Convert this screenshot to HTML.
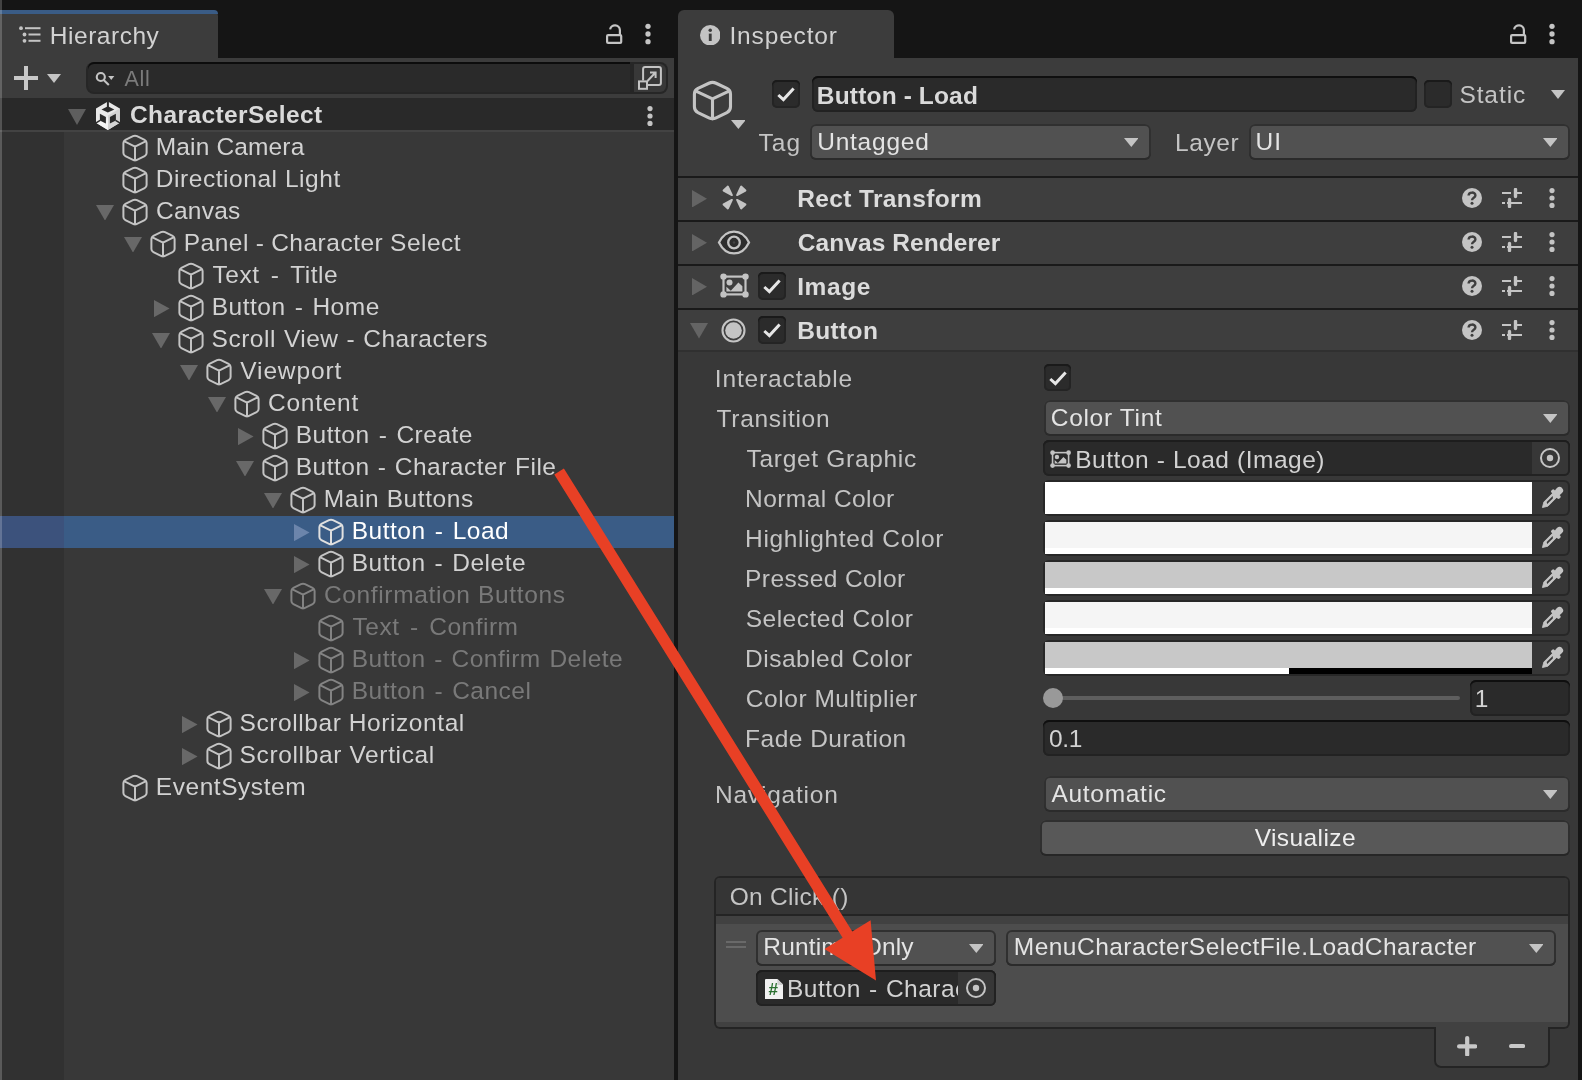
<!DOCTYPE html>
<html><head><meta charset="utf-8"><title>Unity Editor</title>
<style>
html,body{margin:0;padding:0}
body{width:1582px;height:1080px;overflow:hidden;background:#151515;position:relative;font-family:"Liberation Sans", sans-serif}
body>div,body>svg,body>span{position:absolute;display:block}
.t{white-space:nowrap;position:absolute;display:block}
.tl{left:0;top:0;width:1582px;height:1080px;will-change:transform}
</style></head><body>
<div style="left:0px;top:10px;width:218px;height:48px;background:#3c3c3c;border-radius:0 6px 0 0"></div>
<div style="left:0px;top:10px;width:218px;height:4px;background:#3a5c86;border-radius:0 6px 0 0"></div>
<div style="left:0px;top:58px;width:674px;height:40px;background:#3c3c3c;"></div>
<div style="left:0px;top:98px;width:674px;height:32px;background:#292929;"></div>
<div style="left:0px;top:130px;width:674px;height:2px;background:#434343;"></div>
<div style="left:0px;top:132px;width:64px;height:948px;background:#313131;"></div>
<div style="left:64px;top:132px;width:610px;height:948px;background:#383838;"></div>
<div style="left:0px;top:516px;width:64px;height:32px;background:#3c527c;"></div>
<div style="left:64px;top:516px;width:610px;height:32px;background:#3a5c86;"></div>
<div style="left:0px;top:0px;width:2px;height:1080px;background:rgba(255,255,255,0.2);"></div>
<svg style="left:19px;top:26px" width="22" height="17" viewBox="0 0 22 17" fill="#c4c4c4"><circle cx="2" cy="2.2" r="1.9"/><circle cx="5.5" cy="8.5" r="1.9"/><circle cx="5.5" cy="14.8" r="1.9"/><rect x="6" y="1.2" width="15.5" height="2"/><rect x="9.5" y="7.5" width="12" height="2"/><rect x="9.5" y="13.8" width="12" height="2"/></svg>
<svg style="left:605.8px;top:23.2px" width="17" height="22" viewBox="0 0 17 22" fill="none" stroke="#c4c4c4" stroke-width="2.2"><rect x="1.1" y="12.1" width="14.1" height="7.8" rx="1"/><path d="M4.1 6.4 A4.95 4.95 0 0 1 13.9 7.05 V12"/></svg>
<svg style="left:643.9px;top:22px" width="8" height="24" viewBox="-4 -12 8 24" fill="#c4c4c4"><circle cx="0" cy="-7.65" r="2.65"/><circle cx="0" cy="0" r="2.65"/><circle cx="0" cy="7.65" r="2.65"/></svg>
<svg style="left:14px;top:66px" width="24" height="24" viewBox="0 0 24 24" fill="#c8c8c8"><rect x="0" y="10" width="24" height="4"/><rect x="10" y="0" width="4" height="24"/></svg>
<svg style="left:47px;top:73.5px" width="14" height="9" viewBox="0 0 14 9"><path d="M0 0 H14 L7.0 9 Z" fill="#c4c4c4"/></svg>
<div style="left:86px;top:62px;width:582px;height:32px;background:#262626;border-radius:8px"></div>
<div style="left:88px;top:64px;width:543px;height:28px;background:#2a2a2a;border-radius:6px 0 0 6px;box-shadow:0 -2px 0 #0c0c0c"></div>
<div style="left:630px;top:62px;width:4px;height:32px;background:#262626;"></div>
<div style="left:634px;top:64px;width:32px;height:28px;background:#383838;border-radius:0 6px 6px 0"></div>
<svg style="left:95px;top:70px" width="20" height="17" viewBox="95 70 20 17" fill="none" stroke="#c4c4c4" stroke-width="2.1"><circle cx="100.8" cy="77" r="4.05"/><path d="M103.7 79.9 L108.8 84.9"/><path d="M108.2 76 H114.3 L111.25 79.9 Z" fill="#c4c4c4" stroke="none"/></svg>
<svg style="left:637px;top:65px" width="26" height="26" viewBox="0 0 26 26" fill="none" stroke="#c4c4c4" stroke-width="2"><path d="M6.1 15.4 V4.1 Q6.1 2.1 8.1 2.1 H21.9 Q23.9 2.1 23.9 4.1 V17.9 Q23.9 19.9 21.9 19.9 H11"/><rect x="2" y="16.4" width="8" height="7.4"/><path d="M10.5 16 L18.3 7.8 M13 7.5 H18.6 V13.1"/></svg>
<svg style="left:68px;top:108.8px" width="18" height="16" viewBox="0 0 18 16"><path d="M0 0 H18 L9.0 16 Z" fill="#5e5e5e"/></svg>
<svg style="left:95px;top:100px" width="26" height="31" viewBox="95 100 26 31"><path d="M107.9 101.6 L119.8 108.6 V122.8 L107.9 129.9 L96 122.8 V108.6 Z" fill="#e9e9e9"/><path d="M107.9 115.6 L119.8 108.6 V122.8 L107.9 129.9 Z" fill="#d4d4d4"/><path d="M107.9 115.6 V129.9 L96 122.8 L100 120.5 L105.8 123.5 Z" fill="#f4f4f4"/><path d="M107.9 101 V107" stroke="#2b2b2b" stroke-width="2"/><path d="M95.6 123.1 L100.2 120.3 M120.2 123.1 L115.6 120.3" stroke="#2b2b2b" stroke-width="1.5"/><path d="M107.9 106.3 L114.3 109.4 L107.9 112.5 L101.5 109.4 Z" fill="#2b2b2b"/><path d="M99.9 113.7 L105.9 116.9 V123.6 L99.9 120.4 Z" fill="#2b2b2b"/><path d="M115.9 113.7 L109.9 116.9 V123.6 L115.9 120.4 Z" fill="#2b2b2b"/></svg>
<svg style="left:646px;top:104px" width="8" height="24" viewBox="-4 -12 8 24" fill="#c4c4c4"><circle cx="0" cy="-7.4" r="2.6"/><circle cx="0" cy="0" r="2.6"/><circle cx="0" cy="7.4" r="2.6"/></svg>
<svg style="left:122px;top:134.1px" width="26" height="28" viewBox="0 0 26 28" fill="none" stroke="#c4c4c4" stroke-width="2" stroke-linejoin="round" stroke-linecap="round"><path d="M11.02 2.16 Q13.00 1.20 14.98 2.16 L22.62 5.84 Q24.60 6.80 24.60 9.00 L24.60 19.00 Q24.60 21.20 22.62 22.16 L14.98 25.84 Q13.00 26.80 11.02 25.84 L3.38 22.16 Q1.40 21.20 1.40 19.00 L1.40 9.00 Q1.40 6.80 3.38 5.84 Z M2 7.2 L13 12.6 L24 7.2 M13 12.6 V26.4"/></svg>
<svg style="left:122px;top:166.1px" width="26" height="28" viewBox="0 0 26 28" fill="none" stroke="#c4c4c4" stroke-width="2" stroke-linejoin="round" stroke-linecap="round"><path d="M11.02 2.16 Q13.00 1.20 14.98 2.16 L22.62 5.84 Q24.60 6.80 24.60 9.00 L24.60 19.00 Q24.60 21.20 22.62 22.16 L14.98 25.84 Q13.00 26.80 11.02 25.84 L3.38 22.16 Q1.40 21.20 1.40 19.00 L1.40 9.00 Q1.40 6.80 3.38 5.84 Z M2 7.2 L13 12.6 L24 7.2 M13 12.6 V26.4"/></svg>
<svg style="left:122px;top:198.1px" width="26" height="28" viewBox="0 0 26 28" fill="none" stroke="#c4c4c4" stroke-width="2" stroke-linejoin="round" stroke-linecap="round"><path d="M11.02 2.16 Q13.00 1.20 14.98 2.16 L22.62 5.84 Q24.60 6.80 24.60 9.00 L24.60 19.00 Q24.60 21.20 22.62 22.16 L14.98 25.84 Q13.00 26.80 11.02 25.84 L3.38 22.16 Q1.40 21.20 1.40 19.00 L1.40 9.00 Q1.40 6.80 3.38 5.84 Z M2 7.2 L13 12.6 L24 7.2 M13 12.6 V26.4"/></svg>
<svg style="left:95.9px;top:204.9px" width="18" height="15.6" viewBox="0 0 18 15.6"><path d="M0 0 H18 L9.0 15.6 Z" fill="#686868"/></svg>
<svg style="left:150px;top:230.1px" width="26" height="28" viewBox="0 0 26 28" fill="none" stroke="#c4c4c4" stroke-width="2" stroke-linejoin="round" stroke-linecap="round"><path d="M11.02 2.16 Q13.00 1.20 14.98 2.16 L22.62 5.84 Q24.60 6.80 24.60 9.00 L24.60 19.00 Q24.60 21.20 22.62 22.16 L14.98 25.84 Q13.00 26.80 11.02 25.84 L3.38 22.16 Q1.40 21.20 1.40 19.00 L1.40 9.00 Q1.40 6.80 3.38 5.84 Z M2 7.2 L13 12.6 L24 7.2 M13 12.6 V26.4"/></svg>
<svg style="left:123.9px;top:236.9px" width="18" height="15.6" viewBox="0 0 18 15.6"><path d="M0 0 H18 L9.0 15.6 Z" fill="#686868"/></svg>
<svg style="left:178px;top:262.1px" width="26" height="28" viewBox="0 0 26 28" fill="none" stroke="#c4c4c4" stroke-width="2" stroke-linejoin="round" stroke-linecap="round"><path d="M11.02 2.16 Q13.00 1.20 14.98 2.16 L22.62 5.84 Q24.60 6.80 24.60 9.00 L24.60 19.00 Q24.60 21.20 22.62 22.16 L14.98 25.84 Q13.00 26.80 11.02 25.84 L3.38 22.16 Q1.40 21.20 1.40 19.00 L1.40 9.00 Q1.40 6.80 3.38 5.84 Z M2 7.2 L13 12.6 L24 7.2 M13 12.6 V26.4"/></svg>
<svg style="left:178px;top:294.1px" width="26" height="28" viewBox="0 0 26 28" fill="none" stroke="#c4c4c4" stroke-width="2" stroke-linejoin="round" stroke-linecap="round"><path d="M11.02 2.16 Q13.00 1.20 14.98 2.16 L22.62 5.84 Q24.60 6.80 24.60 9.00 L24.60 19.00 Q24.60 21.20 22.62 22.16 L14.98 25.84 Q13.00 26.80 11.02 25.84 L3.38 22.16 Q1.40 21.20 1.40 19.00 L1.40 9.00 Q1.40 6.80 3.38 5.84 Z M2 7.2 L13 12.6 L24 7.2 M13 12.6 V26.4"/></svg>
<svg style="left:154px;top:299.8px" width="15.6" height="17.2" viewBox="0 0 15.6 17.2"><path d="M0 0 V17.2 L15.6 8.6 Z" fill="#686868"/></svg>
<svg style="left:178px;top:326.1px" width="26" height="28" viewBox="0 0 26 28" fill="none" stroke="#c4c4c4" stroke-width="2" stroke-linejoin="round" stroke-linecap="round"><path d="M11.02 2.16 Q13.00 1.20 14.98 2.16 L22.62 5.84 Q24.60 6.80 24.60 9.00 L24.60 19.00 Q24.60 21.20 22.62 22.16 L14.98 25.84 Q13.00 26.80 11.02 25.84 L3.38 22.16 Q1.40 21.20 1.40 19.00 L1.40 9.00 Q1.40 6.80 3.38 5.84 Z M2 7.2 L13 12.6 L24 7.2 M13 12.6 V26.4"/></svg>
<svg style="left:151.9px;top:332.9px" width="18" height="15.6" viewBox="0 0 18 15.6"><path d="M0 0 H18 L9.0 15.6 Z" fill="#686868"/></svg>
<svg style="left:206px;top:358.1px" width="26" height="28" viewBox="0 0 26 28" fill="none" stroke="#c4c4c4" stroke-width="2" stroke-linejoin="round" stroke-linecap="round"><path d="M11.02 2.16 Q13.00 1.20 14.98 2.16 L22.62 5.84 Q24.60 6.80 24.60 9.00 L24.60 19.00 Q24.60 21.20 22.62 22.16 L14.98 25.84 Q13.00 26.80 11.02 25.84 L3.38 22.16 Q1.40 21.20 1.40 19.00 L1.40 9.00 Q1.40 6.80 3.38 5.84 Z M2 7.2 L13 12.6 L24 7.2 M13 12.6 V26.4"/></svg>
<svg style="left:179.9px;top:364.9px" width="18" height="15.6" viewBox="0 0 18 15.6"><path d="M0 0 H18 L9.0 15.6 Z" fill="#686868"/></svg>
<svg style="left:234px;top:390.1px" width="26" height="28" viewBox="0 0 26 28" fill="none" stroke="#c4c4c4" stroke-width="2" stroke-linejoin="round" stroke-linecap="round"><path d="M11.02 2.16 Q13.00 1.20 14.98 2.16 L22.62 5.84 Q24.60 6.80 24.60 9.00 L24.60 19.00 Q24.60 21.20 22.62 22.16 L14.98 25.84 Q13.00 26.80 11.02 25.84 L3.38 22.16 Q1.40 21.20 1.40 19.00 L1.40 9.00 Q1.40 6.80 3.38 5.84 Z M2 7.2 L13 12.6 L24 7.2 M13 12.6 V26.4"/></svg>
<svg style="left:207.9px;top:396.9px" width="18" height="15.6" viewBox="0 0 18 15.6"><path d="M0 0 H18 L9.0 15.6 Z" fill="#686868"/></svg>
<svg style="left:262px;top:422.1px" width="26" height="28" viewBox="0 0 26 28" fill="none" stroke="#c4c4c4" stroke-width="2" stroke-linejoin="round" stroke-linecap="round"><path d="M11.02 2.16 Q13.00 1.20 14.98 2.16 L22.62 5.84 Q24.60 6.80 24.60 9.00 L24.60 19.00 Q24.60 21.20 22.62 22.16 L14.98 25.84 Q13.00 26.80 11.02 25.84 L3.38 22.16 Q1.40 21.20 1.40 19.00 L1.40 9.00 Q1.40 6.80 3.38 5.84 Z M2 7.2 L13 12.6 L24 7.2 M13 12.6 V26.4"/></svg>
<svg style="left:238px;top:427.8px" width="15.6" height="17.2" viewBox="0 0 15.6 17.2"><path d="M0 0 V17.2 L15.6 8.6 Z" fill="#686868"/></svg>
<svg style="left:262px;top:454.1px" width="26" height="28" viewBox="0 0 26 28" fill="none" stroke="#c4c4c4" stroke-width="2" stroke-linejoin="round" stroke-linecap="round"><path d="M11.02 2.16 Q13.00 1.20 14.98 2.16 L22.62 5.84 Q24.60 6.80 24.60 9.00 L24.60 19.00 Q24.60 21.20 22.62 22.16 L14.98 25.84 Q13.00 26.80 11.02 25.84 L3.38 22.16 Q1.40 21.20 1.40 19.00 L1.40 9.00 Q1.40 6.80 3.38 5.84 Z M2 7.2 L13 12.6 L24 7.2 M13 12.6 V26.4"/></svg>
<svg style="left:235.9px;top:460.9px" width="18" height="15.6" viewBox="0 0 18 15.6"><path d="M0 0 H18 L9.0 15.6 Z" fill="#686868"/></svg>
<svg style="left:290px;top:486.1px" width="26" height="28" viewBox="0 0 26 28" fill="none" stroke="#c4c4c4" stroke-width="2" stroke-linejoin="round" stroke-linecap="round"><path d="M11.02 2.16 Q13.00 1.20 14.98 2.16 L22.62 5.84 Q24.60 6.80 24.60 9.00 L24.60 19.00 Q24.60 21.20 22.62 22.16 L14.98 25.84 Q13.00 26.80 11.02 25.84 L3.38 22.16 Q1.40 21.20 1.40 19.00 L1.40 9.00 Q1.40 6.80 3.38 5.84 Z M2 7.2 L13 12.6 L24 7.2 M13 12.6 V26.4"/></svg>
<svg style="left:263.9px;top:492.9px" width="18" height="15.6" viewBox="0 0 18 15.6"><path d="M0 0 H18 L9.0 15.6 Z" fill="#686868"/></svg>
<svg style="left:318px;top:518.1px" width="26" height="28" viewBox="0 0 26 28" fill="none" stroke="#e0e0e0" stroke-width="2" stroke-linejoin="round" stroke-linecap="round"><path d="M11.02 2.16 Q13.00 1.20 14.98 2.16 L22.62 5.84 Q24.60 6.80 24.60 9.00 L24.60 19.00 Q24.60 21.20 22.62 22.16 L14.98 25.84 Q13.00 26.80 11.02 25.84 L3.38 22.16 Q1.40 21.20 1.40 19.00 L1.40 9.00 Q1.40 6.80 3.38 5.84 Z M2 7.2 L13 12.6 L24 7.2 M13 12.6 V26.4"/></svg>
<svg style="left:294px;top:523.8px" width="15.6" height="17.2" viewBox="0 0 15.6 17.2"><path d="M0 0 V17.2 L15.6 8.6 Z" fill="#6c85ab"/></svg>
<svg style="left:318px;top:550.1px" width="26" height="28" viewBox="0 0 26 28" fill="none" stroke="#c4c4c4" stroke-width="2" stroke-linejoin="round" stroke-linecap="round"><path d="M11.02 2.16 Q13.00 1.20 14.98 2.16 L22.62 5.84 Q24.60 6.80 24.60 9.00 L24.60 19.00 Q24.60 21.20 22.62 22.16 L14.98 25.84 Q13.00 26.80 11.02 25.84 L3.38 22.16 Q1.40 21.20 1.40 19.00 L1.40 9.00 Q1.40 6.80 3.38 5.84 Z M2 7.2 L13 12.6 L24 7.2 M13 12.6 V26.4"/></svg>
<svg style="left:294px;top:555.8px" width="15.6" height="17.2" viewBox="0 0 15.6 17.2"><path d="M0 0 V17.2 L15.6 8.6 Z" fill="#686868"/></svg>
<svg style="left:290px;top:582.1px" width="26" height="28" viewBox="0 0 26 28" fill="none" stroke="#838383" stroke-width="2" stroke-linejoin="round" stroke-linecap="round"><path d="M11.02 2.16 Q13.00 1.20 14.98 2.16 L22.62 5.84 Q24.60 6.80 24.60 9.00 L24.60 19.00 Q24.60 21.20 22.62 22.16 L14.98 25.84 Q13.00 26.80 11.02 25.84 L3.38 22.16 Q1.40 21.20 1.40 19.00 L1.40 9.00 Q1.40 6.80 3.38 5.84 Z M2 7.2 L13 12.6 L24 7.2 M13 12.6 V26.4"/></svg>
<svg style="left:263.9px;top:588.9px" width="18" height="15.6" viewBox="0 0 18 15.6"><path d="M0 0 H18 L9.0 15.6 Z" fill="#686868"/></svg>
<svg style="left:318px;top:614.1px" width="26" height="28" viewBox="0 0 26 28" fill="none" stroke="#838383" stroke-width="2" stroke-linejoin="round" stroke-linecap="round"><path d="M11.02 2.16 Q13.00 1.20 14.98 2.16 L22.62 5.84 Q24.60 6.80 24.60 9.00 L24.60 19.00 Q24.60 21.20 22.62 22.16 L14.98 25.84 Q13.00 26.80 11.02 25.84 L3.38 22.16 Q1.40 21.20 1.40 19.00 L1.40 9.00 Q1.40 6.80 3.38 5.84 Z M2 7.2 L13 12.6 L24 7.2 M13 12.6 V26.4"/></svg>
<svg style="left:318px;top:646.1px" width="26" height="28" viewBox="0 0 26 28" fill="none" stroke="#838383" stroke-width="2" stroke-linejoin="round" stroke-linecap="round"><path d="M11.02 2.16 Q13.00 1.20 14.98 2.16 L22.62 5.84 Q24.60 6.80 24.60 9.00 L24.60 19.00 Q24.60 21.20 22.62 22.16 L14.98 25.84 Q13.00 26.80 11.02 25.84 L3.38 22.16 Q1.40 21.20 1.40 19.00 L1.40 9.00 Q1.40 6.80 3.38 5.84 Z M2 7.2 L13 12.6 L24 7.2 M13 12.6 V26.4"/></svg>
<svg style="left:294px;top:651.8px" width="15.6" height="17.2" viewBox="0 0 15.6 17.2"><path d="M0 0 V17.2 L15.6 8.6 Z" fill="#686868"/></svg>
<svg style="left:318px;top:678.1px" width="26" height="28" viewBox="0 0 26 28" fill="none" stroke="#838383" stroke-width="2" stroke-linejoin="round" stroke-linecap="round"><path d="M11.02 2.16 Q13.00 1.20 14.98 2.16 L22.62 5.84 Q24.60 6.80 24.60 9.00 L24.60 19.00 Q24.60 21.20 22.62 22.16 L14.98 25.84 Q13.00 26.80 11.02 25.84 L3.38 22.16 Q1.40 21.20 1.40 19.00 L1.40 9.00 Q1.40 6.80 3.38 5.84 Z M2 7.2 L13 12.6 L24 7.2 M13 12.6 V26.4"/></svg>
<svg style="left:294px;top:683.8px" width="15.6" height="17.2" viewBox="0 0 15.6 17.2"><path d="M0 0 V17.2 L15.6 8.6 Z" fill="#686868"/></svg>
<svg style="left:206px;top:710.1px" width="26" height="28" viewBox="0 0 26 28" fill="none" stroke="#c4c4c4" stroke-width="2" stroke-linejoin="round" stroke-linecap="round"><path d="M11.02 2.16 Q13.00 1.20 14.98 2.16 L22.62 5.84 Q24.60 6.80 24.60 9.00 L24.60 19.00 Q24.60 21.20 22.62 22.16 L14.98 25.84 Q13.00 26.80 11.02 25.84 L3.38 22.16 Q1.40 21.20 1.40 19.00 L1.40 9.00 Q1.40 6.80 3.38 5.84 Z M2 7.2 L13 12.6 L24 7.2 M13 12.6 V26.4"/></svg>
<svg style="left:182px;top:715.8px" width="15.6" height="17.2" viewBox="0 0 15.6 17.2"><path d="M0 0 V17.2 L15.6 8.6 Z" fill="#686868"/></svg>
<svg style="left:206px;top:742.1px" width="26" height="28" viewBox="0 0 26 28" fill="none" stroke="#c4c4c4" stroke-width="2" stroke-linejoin="round" stroke-linecap="round"><path d="M11.02 2.16 Q13.00 1.20 14.98 2.16 L22.62 5.84 Q24.60 6.80 24.60 9.00 L24.60 19.00 Q24.60 21.20 22.62 22.16 L14.98 25.84 Q13.00 26.80 11.02 25.84 L3.38 22.16 Q1.40 21.20 1.40 19.00 L1.40 9.00 Q1.40 6.80 3.38 5.84 Z M2 7.2 L13 12.6 L24 7.2 M13 12.6 V26.4"/></svg>
<svg style="left:182px;top:747.8px" width="15.6" height="17.2" viewBox="0 0 15.6 17.2"><path d="M0 0 V17.2 L15.6 8.6 Z" fill="#686868"/></svg>
<svg style="left:122px;top:774.1px" width="26" height="28" viewBox="0 0 26 28" fill="none" stroke="#c4c4c4" stroke-width="2" stroke-linejoin="round" stroke-linecap="round"><path d="M11.02 2.16 Q13.00 1.20 14.98 2.16 L22.62 5.84 Q24.60 6.80 24.60 9.00 L24.60 19.00 Q24.60 21.20 22.62 22.16 L14.98 25.84 Q13.00 26.80 11.02 25.84 L3.38 22.16 Q1.40 21.20 1.40 19.00 L1.40 9.00 Q1.40 6.80 3.38 5.84 Z M2 7.2 L13 12.6 L24 7.2 M13 12.6 V26.4"/></svg>
<div style="left:674px;top:58px;width:4px;height:1022px;background:#151515;"></div>
<div style="left:678px;top:10px;width:216px;height:48px;background:#3c3c3c;border-radius:6px 6px 0 0"></div>
<div style="left:678px;top:58px;width:900px;height:118px;background:#3c3c3c;"></div>
<div style="left:678px;top:176px;width:900px;height:904px;background:#383838;"></div>
<svg style="left:699.7px;top:24.8px" width="20.5" height="20.5" viewBox="0 0 20 20"><circle cx="10" cy="10" r="10" fill="#c4c4c4"/><rect x="8.6" y="8.4" width="2.8" height="7.2" fill="#3c3c3c"/><circle cx="10" cy="5.2" r="1.7" fill="#3c3c3c"/></svg>
<svg style="left:1509.8px;top:23.2px" width="17" height="22" viewBox="0 0 17 22" fill="none" stroke="#c4c4c4" stroke-width="2.2"><rect x="1.1" y="12.1" width="14.1" height="7.8" rx="1"/><path d="M4.1 6.4 A4.95 4.95 0 0 1 13.9 7.05 V12"/></svg>
<svg style="left:1547.9px;top:22px" width="8" height="24" viewBox="-4 -12 8 24" fill="#c4c4c4"><circle cx="0" cy="-7.65" r="2.65"/><circle cx="0" cy="0" r="2.65"/><circle cx="0" cy="7.65" r="2.65"/></svg>
<svg style="left:690px;top:78px" width="45" height="45" viewBox="690 78 45 45" fill="none" stroke="#c4c4c4" stroke-width="3.1" stroke-linejoin="round" stroke-linecap="round"><path d="M708.89 83.23 Q712.50 81.50 716.10 83.24 L726.90 88.46 Q730.50 90.20 730.50 94.20 L730.50 106.80 Q730.50 110.80 726.91 112.57 L716.09 117.93 Q712.50 119.70 708.91 117.93 L697.99 112.57 Q694.40 110.80 694.40 106.80 L694.40 94.20 Q694.40 90.20 698.01 88.47 Z M695.4 90.9 L712.5 98.9 L729.5 90.9 M712.5 98.9 V119"/></svg>
<svg style="left:730.6px;top:120px" width="14.8" height="9" viewBox="0 0 14.8 9"><path d="M0 0 H14.8 L7.4 9 Z" fill="#c4c4c4"/></svg>
<div style="left:772px;top:80px;width:28px;height:28px;background:#2b2b2b;border-radius:5px;box-shadow:inset 0 2px 0 #1a1a1a, inset 0 0 0 2px #242424"></div><svg style="left:776px;top:85.3px" width="20" height="18" viewBox="0 0 20 18" fill="none" stroke="#e6e6e6" stroke-width="3"><path d="M2.3 10 L7.4 14.6 L17.6 3.4"/></svg>
<div style="left:812px;top:76px;width:605px;height:36px;background:#2a2a2a;border-radius:6px;box-shadow:inset 0 2px 0 #0f0f0f, inset 0 0 0 2px #222222;"></div>
<div style="left:1424px;top:80px;width:28px;height:28px;background:#2b2b2b;border-radius:5px;box-shadow:inset 0 2px 0 #1a1a1a, inset 0 0 0 2px #242424"></div>
<svg style="left:1551px;top:90px" width="14" height="9" viewBox="0 0 14 9"><path d="M0 0 H14 L7.0 9 Z" fill="#c4c4c4"/></svg>
<div style="left:810px;top:124px;width:341px;height:36px;background:#515151;border-radius:6px;box-shadow:inset 0 -2px 0 #2b2b2b, inset 0 0 0 2px #303030"></div><svg style="left:1123.7px;top:138px" width="14.6" height="9" viewBox="0 0 14.6 9"><path d="M0 0 H14.6 L7.3 9 Z" fill="#c4c4c4"/></svg>
<div style="left:1249px;top:124px;width:321px;height:36px;background:#515151;border-radius:6px;box-shadow:inset 0 -2px 0 #2b2b2b, inset 0 0 0 2px #303030"></div><svg style="left:1542.7px;top:138px" width="14.6" height="9" viewBox="0 0 14.6 9"><path d="M0 0 H14.6 L7.3 9 Z" fill="#c4c4c4"/></svg>
<div style="left:678px;top:176px;width:900px;height:2px;background:#1a1a1a;"></div>
<div style="left:678px;top:178px;width:900px;height:42px;background:#3e3e3e;"></div>
<svg style="left:692px;top:189.75px" width="15" height="17.5" viewBox="0 0 15 17.5"><path d="M0 0 V17.5 L15 8.75 Z" fill="#646464"/></svg>
<svg style="left:1462px;top:188px" width="20" height="20" viewBox="0 0 20 20"><circle cx="10" cy="10" r="10" fill="#c4c4c4"/><path d="M6.6 7.6 C6.6 3.6 13.4 3.6 13.4 7.4 C13.4 9.8 10 9.6 10 12.2" fill="none" stroke="#3e3e3e" stroke-width="2.4"/><circle cx="10" cy="15.3" r="1.5" fill="#3e3e3e"/></svg>
<svg style="left:1502px;top:188px" width="20" height="20" viewBox="0 0 20 20" stroke="#c4c4c4" stroke-width="2" fill="none"><path d="M0 5 H9 M15 5 H20 M0 15 H3 M9 15 H20"/><path d="M13.5 1.5 V8.5 M7.5 11.5 V18.5" stroke-width="3.4" stroke-linecap="round"/><path d="M12 5 H17 M5 15 H10" /></svg>
<svg style="left:1548px;top:186px" width="8" height="24" viewBox="-4 -12 8 24" fill="#c4c4c4"><circle cx="0" cy="-7.4" r="2.6"/><circle cx="0" cy="0" r="2.6"/><circle cx="0" cy="7.4" r="2.6"/></svg>
<svg style="left:722px;top:185.1px" width="25" height="25" viewBox="-12.5 -12.5 25 25" fill="#c4c4c4" stroke="#c4c4c4" stroke-width="2" stroke-linejoin="round"><path transform="scale(1,1)" d="M2.6 2.4 L10.9 6.9 L6.6 10.9 Z"/><path transform="scale(-1,1)" d="M2.6 2.4 L10.9 6.9 L6.6 10.9 Z"/><path transform="scale(1,-1)" d="M2.6 2.4 L10.9 6.9 L6.6 10.9 Z"/><path transform="scale(-1,-1)" d="M2.6 2.4 L10.9 6.9 L6.6 10.9 Z"/></svg>
<div style="left:678px;top:220px;width:900px;height:2px;background:#1a1a1a;"></div>
<div style="left:678px;top:222px;width:900px;height:42px;background:#3e3e3e;"></div>
<svg style="left:692px;top:233.75px" width="15" height="17.5" viewBox="0 0 15 17.5"><path d="M0 0 V17.5 L15 8.75 Z" fill="#646464"/></svg>
<svg style="left:1462px;top:232px" width="20" height="20" viewBox="0 0 20 20"><circle cx="10" cy="10" r="10" fill="#c4c4c4"/><path d="M6.6 7.6 C6.6 3.6 13.4 3.6 13.4 7.4 C13.4 9.8 10 9.6 10 12.2" fill="none" stroke="#3e3e3e" stroke-width="2.4"/><circle cx="10" cy="15.3" r="1.5" fill="#3e3e3e"/></svg>
<svg style="left:1502px;top:232px" width="20" height="20" viewBox="0 0 20 20" stroke="#c4c4c4" stroke-width="2" fill="none"><path d="M0 5 H9 M15 5 H20 M0 15 H3 M9 15 H20"/><path d="M13.5 1.5 V8.5 M7.5 11.5 V18.5" stroke-width="3.4" stroke-linecap="round"/><path d="M12 5 H17 M5 15 H10" /></svg>
<svg style="left:1548px;top:230px" width="8" height="24" viewBox="-4 -12 8 24" fill="#c4c4c4"><circle cx="0" cy="-7.4" r="2.6"/><circle cx="0" cy="0" r="2.6"/><circle cx="0" cy="7.4" r="2.6"/></svg>
<svg style="left:716.9px;top:228.6px" width="34" height="27" viewBox="-17 -13.5 34 27" fill="none" stroke="#c4c4c4" stroke-width="2.3"><path d="M-15 0 C-8 -14.6 8 -14.6 15 0 C8 14.6 -8 14.6 -15 0 Z" fill="#2d2d2d"/><circle cx="0" cy="0" r="5.8"/><circle cx="0" cy="0" r="1.2" fill="#444" stroke="none"/></svg>
<div style="left:678px;top:264px;width:900px;height:2px;background:#1a1a1a;"></div>
<div style="left:678px;top:266px;width:900px;height:42px;background:#3e3e3e;"></div>
<svg style="left:692px;top:277.75px" width="15" height="17.5" viewBox="0 0 15 17.5"><path d="M0 0 V17.5 L15 8.75 Z" fill="#646464"/></svg>
<svg style="left:1462px;top:276px" width="20" height="20" viewBox="0 0 20 20"><circle cx="10" cy="10" r="10" fill="#c4c4c4"/><path d="M6.6 7.6 C6.6 3.6 13.4 3.6 13.4 7.4 C13.4 9.8 10 9.6 10 12.2" fill="none" stroke="#3e3e3e" stroke-width="2.4"/><circle cx="10" cy="15.3" r="1.5" fill="#3e3e3e"/></svg>
<svg style="left:1502px;top:276px" width="20" height="20" viewBox="0 0 20 20" stroke="#c4c4c4" stroke-width="2" fill="none"><path d="M0 5 H9 M15 5 H20 M0 15 H3 M9 15 H20"/><path d="M13.5 1.5 V8.5 M7.5 11.5 V18.5" stroke-width="3.4" stroke-linecap="round"/><path d="M12 5 H17 M5 15 H10" /></svg>
<svg style="left:1548px;top:274px" width="8" height="24" viewBox="-4 -12 8 24" fill="#c4c4c4"><circle cx="0" cy="-7.4" r="2.6"/><circle cx="0" cy="0" r="2.6"/><circle cx="0" cy="7.4" r="2.6"/></svg>
<div style="left:758px;top:272px;width:28px;height:28px;background:#2b2b2b;border-radius:5px;box-shadow:inset 0 2px 0 #1a1a1a, inset 0 0 0 2px #242424"></div><svg style="left:762px;top:277.3px" width="20" height="18" viewBox="0 0 20 18" fill="none" stroke="#e6e6e6" stroke-width="3"><path d="M2.3 10 L7.4 14.6 L17.6 3.4"/></svg>
<svg style="left:719.5px;top:273.4px" width="29" height="25" viewBox="0 0 29 25"><rect x="3.5" y="3.6" width="22" height="17.8" fill="none" stroke="#c4c4c4" stroke-width="2.2"/><path d="M6.4 13.7 L10.8 17.7 L18.4 9.6 L22.4 13.3 V18.5 H6.4 Z" fill="#c4c4c4"/><circle cx="9.5" cy="9.6" r="3" fill="#c4c4c4"/><circle cx="3.5" cy="3.6" r="3.2" fill="#c4c4c4"/><circle cx="25.5" cy="3.6" r="3.2" fill="#c4c4c4"/><circle cx="3.5" cy="21.4" r="3.2" fill="#c4c4c4"/><circle cx="25.5" cy="21.4" r="3.2" fill="#c4c4c4"/></svg>
<div style="left:678px;top:308px;width:900px;height:2px;background:#1a1a1a;"></div>
<div style="left:678px;top:310px;width:900px;height:42px;background:#3e3e3e;"></div>
<svg style="left:689.8px;top:323.25px" width="18" height="15.5" viewBox="0 0 18 15.5"><path d="M0 0 H18 L9.0 15.5 Z" fill="#646464"/></svg>
<svg style="left:1462px;top:320px" width="20" height="20" viewBox="0 0 20 20"><circle cx="10" cy="10" r="10" fill="#c4c4c4"/><path d="M6.6 7.6 C6.6 3.6 13.4 3.6 13.4 7.4 C13.4 9.8 10 9.6 10 12.2" fill="none" stroke="#3e3e3e" stroke-width="2.4"/><circle cx="10" cy="15.3" r="1.5" fill="#3e3e3e"/></svg>
<svg style="left:1502px;top:320px" width="20" height="20" viewBox="0 0 20 20" stroke="#c4c4c4" stroke-width="2" fill="none"><path d="M0 5 H9 M15 5 H20 M0 15 H3 M9 15 H20"/><path d="M13.5 1.5 V8.5 M7.5 11.5 V18.5" stroke-width="3.4" stroke-linecap="round"/><path d="M12 5 H17 M5 15 H10" /></svg>
<svg style="left:1548px;top:318px" width="8" height="24" viewBox="-4 -12 8 24" fill="#c4c4c4"><circle cx="0" cy="-7.4" r="2.6"/><circle cx="0" cy="0" r="2.6"/><circle cx="0" cy="7.4" r="2.6"/></svg>
<div style="left:758px;top:316px;width:28px;height:28px;background:#2b2b2b;border-radius:5px;box-shadow:inset 0 2px 0 #1a1a1a, inset 0 0 0 2px #242424"></div><svg style="left:762px;top:321.3px" width="20" height="18" viewBox="0 0 20 18" fill="none" stroke="#e6e6e6" stroke-width="3"><path d="M2.3 10 L7.4 14.6 L17.6 3.4"/></svg>
<svg style="left:721.4px;top:317.5px" width="25" height="25" viewBox="0 0 25 25"><circle cx="12.5" cy="12.5" r="11" fill="none" stroke="#c4c4c4" stroke-width="2.1"/><circle cx="12.5" cy="12.5" r="8.3" fill="#c4c4c4"/></svg>
<div style="left:678px;top:350px;width:900px;height:2px;background:#303030;"></div>
<div style="left:1044px;top:364px;width:27px;height:27px;background:#2b2b2b;border-radius:5px;box-shadow:inset 0 2px 0 #1a1a1a, inset 0 0 0 2px #242424"></div><svg style="left:1047.5px;top:368.8px" width="20" height="18" viewBox="0 0 20 18" fill="none" stroke="#e6e6e6" stroke-width="3"><path d="M2.3 10 L7.4 14.6 L17.6 3.4"/></svg>
<div style="left:1044px;top:400px;width:526px;height:36px;background:#515151;border-radius:6px;box-shadow:inset 0 -2px 0 #2b2b2b, inset 0 0 0 2px #303030"></div><svg style="left:1542.7px;top:414px" width="14.6" height="9" viewBox="0 0 14.6 9"><path d="M0 0 H14.6 L7.3 9 Z" fill="#c4c4c4"/></svg>
<div style="left:1043px;top:440px;width:527px;height:36px;background:#2a2a2a;border-radius:6px;box-shadow:inset 0 2px 0 #1d1d1d, inset 0 0 0 2px #222222;"></div>
<div style="left:1532px;top:442px;width:36px;height:32px;background:#373737;border-radius:0 4px 4px 0"></div>
<svg style="left:1539px;top:447px" width="22" height="22" viewBox="0 0 22 22"><circle cx="11" cy="11" r="9" fill="none" stroke="#c4c4c4" stroke-width="2"/><circle cx="11" cy="11" r="3.2" fill="#c4c4c4"/></svg>
<svg style="left:1050.32px;top:449.975px" width="21.17" height="18.25" viewBox="0 0 29 25"><rect x="3.5" y="3.6" width="22" height="17.8" fill="none" stroke="#c4c4c4" stroke-width="2.2"/><path d="M6.4 13.7 L10.8 17.7 L18.4 9.6 L22.4 13.3 V18.5 H6.4 Z" fill="#c4c4c4"/><circle cx="9.5" cy="9.6" r="3" fill="#c4c4c4"/><circle cx="3.5" cy="3.6" r="3.2" fill="#c4c4c4"/><circle cx="25.5" cy="3.6" r="3.2" fill="#c4c4c4"/><circle cx="3.5" cy="21.4" r="3.2" fill="#c4c4c4"/><circle cx="25.5" cy="21.4" r="3.2" fill="#c4c4c4"/></svg>
<div style="left:1043px;top:480px;width:527px;height:36px;background:#272727;border-radius:6px"></div><div style="left:1532px;top:482px;width:36px;height:32px;background:#373737;border-radius:0 4px 4px 0"></div><div style="left:1045px;top:482px;width:487px;height:26px;background:#ffffff"></div><div style="left:1045px;top:508px;width:487px;height:6px;background:#ffffff"></div><svg style="left:1538.2px;top:481.6px" width="30" height="30" viewBox="-4 -26 30 30" fill="#c4c4c4"><g transform="rotate(-45)"><path d="M0.6 0 L5.5 -2.9 H18.5 V2.9 H5.5 Z" stroke="#c4c4c4" stroke-width="0.8" stroke-linejoin="round"/><path d="M7.5 -0.9 H16 L14.4 0.9 H6.4 Z" fill="#373737"/><rect x="17.6" y="-5.7" width="4" height="11.4" rx="1.4"/><rect x="20" y="-3.5" width="8.3" height="7" rx="3.3"/></g></svg>
<div style="left:1043px;top:520px;width:527px;height:36px;background:#272727;border-radius:6px"></div><div style="left:1532px;top:522px;width:36px;height:32px;background:#373737;border-radius:0 4px 4px 0"></div><div style="left:1045px;top:522px;width:487px;height:26px;background:#f5f5f5"></div><div style="left:1045px;top:548px;width:487px;height:6px;background:#ffffff"></div><svg style="left:1538.2px;top:521.6px" width="30" height="30" viewBox="-4 -26 30 30" fill="#c4c4c4"><g transform="rotate(-45)"><path d="M0.6 0 L5.5 -2.9 H18.5 V2.9 H5.5 Z" stroke="#c4c4c4" stroke-width="0.8" stroke-linejoin="round"/><path d="M7.5 -0.9 H16 L14.4 0.9 H6.4 Z" fill="#373737"/><rect x="17.6" y="-5.7" width="4" height="11.4" rx="1.4"/><rect x="20" y="-3.5" width="8.3" height="7" rx="3.3"/></g></svg>
<div style="left:1043px;top:560px;width:527px;height:36px;background:#272727;border-radius:6px"></div><div style="left:1532px;top:562px;width:36px;height:32px;background:#373737;border-radius:0 4px 4px 0"></div><div style="left:1045px;top:562px;width:487px;height:26px;background:#c8c8c8"></div><div style="left:1045px;top:588px;width:487px;height:6px;background:#ffffff"></div><svg style="left:1538.2px;top:561.6px" width="30" height="30" viewBox="-4 -26 30 30" fill="#c4c4c4"><g transform="rotate(-45)"><path d="M0.6 0 L5.5 -2.9 H18.5 V2.9 H5.5 Z" stroke="#c4c4c4" stroke-width="0.8" stroke-linejoin="round"/><path d="M7.5 -0.9 H16 L14.4 0.9 H6.4 Z" fill="#373737"/><rect x="17.6" y="-5.7" width="4" height="11.4" rx="1.4"/><rect x="20" y="-3.5" width="8.3" height="7" rx="3.3"/></g></svg>
<div style="left:1043px;top:600px;width:527px;height:36px;background:#272727;border-radius:6px"></div><div style="left:1532px;top:602px;width:36px;height:32px;background:#373737;border-radius:0 4px 4px 0"></div><div style="left:1045px;top:602px;width:487px;height:26px;background:#f5f5f5"></div><div style="left:1045px;top:628px;width:487px;height:6px;background:#ffffff"></div><svg style="left:1538.2px;top:601.6px" width="30" height="30" viewBox="-4 -26 30 30" fill="#c4c4c4"><g transform="rotate(-45)"><path d="M0.6 0 L5.5 -2.9 H18.5 V2.9 H5.5 Z" stroke="#c4c4c4" stroke-width="0.8" stroke-linejoin="round"/><path d="M7.5 -0.9 H16 L14.4 0.9 H6.4 Z" fill="#373737"/><rect x="17.6" y="-5.7" width="4" height="11.4" rx="1.4"/><rect x="20" y="-3.5" width="8.3" height="7" rx="3.3"/></g></svg>
<div style="left:1043px;top:640px;width:527px;height:36px;background:#272727;border-radius:6px"></div><div style="left:1532px;top:642px;width:36px;height:32px;background:#373737;border-radius:0 4px 4px 0"></div><div style="left:1045px;top:642px;width:487px;height:26px;background:#c8c8c8"></div><div style="left:1045px;top:668px;width:243.987px;height:6px;background:#ffffff"></div><div style="left:1288.99px;top:668px;width:243.013px;height:6px;background:#000000"></div><svg style="left:1538.2px;top:641.6px" width="30" height="30" viewBox="-4 -26 30 30" fill="#c4c4c4"><g transform="rotate(-45)"><path d="M0.6 0 L5.5 -2.9 H18.5 V2.9 H5.5 Z" stroke="#c4c4c4" stroke-width="0.8" stroke-linejoin="round"/><path d="M7.5 -0.9 H16 L14.4 0.9 H6.4 Z" fill="#373737"/><rect x="17.6" y="-5.7" width="4" height="11.4" rx="1.4"/><rect x="20" y="-3.5" width="8.3" height="7" rx="3.3"/></g></svg>
<div style="left:1053px;top:696px;width:407px;height:4px;background:#5e5e5e;border-radius:2px"></div>
<div style="left:1043px;top:688px;width:20px;height:20px;border-radius:10px;background:#999999"></div>
<div style="left:1470px;top:680px;width:100px;height:36px;background:#2a2a2a;border-radius:6px;box-shadow:inset 0 2px 0 #0f0f0f, inset 0 0 0 2px #222222;"></div>
<div style="left:1043px;top:720px;width:527px;height:36px;background:#2a2a2a;border-radius:6px;box-shadow:inset 0 2px 0 #0f0f0f, inset 0 0 0 2px #222222;"></div>
<div style="left:1044px;top:776px;width:526px;height:36px;background:#515151;border-radius:6px;box-shadow:inset 0 -2px 0 #2b2b2b, inset 0 0 0 2px #303030"></div><svg style="left:1542.7px;top:790px" width="14.6" height="9" viewBox="0 0 14.6 9"><path d="M0 0 H14.6 L7.3 9 Z" fill="#c4c4c4"/></svg>
<div style="left:1040px;top:820px;width:530px;height:36px;background:#585858;border-radius:6px;box-shadow:inset 0 -2px 0 #262626, inset 0 0 0 2px #2f2f2f"></div>
<div style="left:714px;top:876px;width:856px;height:153px;background:#414141;border-radius:6px;box-shadow:inset 0 0 0 2px #242424"></div>
<div style="left:716px;top:878px;width:852px;height:36px;background:#353535;border-radius:4px 4px 0 0"></div>
<div style="left:716px;top:913.5px;width:852px;height:2.5px;background:#242424;"></div>
<div style="left:716px;top:924px;width:852px;height:98px;background:#4d4d4d;"></div>
<div style="left:726px;top:941px;width:20px;height:2px;background:#696969;"></div>
<div style="left:726px;top:946px;width:20px;height:2px;background:#696969;"></div>
<div style="left:756px;top:930px;width:240px;height:36px;background:#515151;border-radius:6px;box-shadow:inset 0 -2px 0 #2b2b2b, inset 0 0 0 2px #303030"></div><svg style="left:968.7px;top:944px" width="14.6" height="9" viewBox="0 0 14.6 9"><path d="M0 0 H14.6 L7.3 9 Z" fill="#c4c4c4"/></svg>
<div style="left:1006px;top:930px;width:550px;height:36px;background:#515151;border-radius:6px;box-shadow:inset 0 -2px 0 #2b2b2b, inset 0 0 0 2px #303030"></div><svg style="left:1528.7px;top:944px" width="14.6" height="9" viewBox="0 0 14.6 9"><path d="M0 0 H14.6 L7.3 9 Z" fill="#c4c4c4"/></svg>
<div style="left:756px;top:970px;width:240px;height:36px;background:#2a2a2a;border-radius:6px;box-shadow:inset 0 2px 0 #1d1d1d, inset 0 0 0 2px #222222;"></div>
<div style="left:958px;top:972px;width:36px;height:32px;background:#373737;border-radius:0 4px 4px 0"></div>
<svg style="left:965px;top:977px" width="22" height="22" viewBox="0 0 22 22"><circle cx="11" cy="11" r="9" fill="none" stroke="#c4c4c4" stroke-width="2"/><circle cx="11" cy="11" r="3.2" fill="#c4c4c4"/></svg>
<svg style="left:764.7px;top:978.6px" width="18.4" height="20.6" viewBox="0 0 18.4 20.6"><path d="M0 1 Q0 0 1 0 H12.4 L18.4 6 V19.6 Q18.4 20.6 17.4 20.6 H1 Q0 20.6 0 19.6 Z" fill="#f1f1f1"/><path d="M12.4 0 V6 H18.4 Z" fill="#cfcfcf"/></svg>
<div style="left:1434px;top:1027px;width:116px;height:41px;background:#414141;border-radius:0 0 7px 7px;box-shadow:inset 0 0 0 2px #242424"></div>
<div style="left:1436px;top:1022px;width:112px;height:8px;background:#414141;"></div>
<svg style="left:1456.8px;top:1035.6px" width="20.4" height="20.8" viewBox="0 0 20.4 20.8" fill="#c8c8c8"><rect x="0" y="8.3" width="20.4" height="4.2" rx="2.1"/><rect x="8.1" y="0" width="4.2" height="20.8" rx="2.1"/></svg>
<svg style="left:1509px;top:1043.9px" width="16.2" height="4.2" viewBox="0 0 16.2 4.2" fill="#c8c8c8"><rect x="0" y="0" width="16.2" height="4.2" rx="2.1"/></svg>
<div style="left:1578px;top:0px;width:4px;height:1080px;background:#151515;"></div>
<div class="tl">
<span class="t" style="left:49.79px;top:16px;height:40px;line-height:40px;font-size:24.5px;font-weight:400;color:#d2d2d2;letter-spacing:0.53px">Hierarchy</span>
<span class="t" style="left:124.39px;top:59.2px;height:40px;line-height:40px;font-size:21.5px;font-weight:400;color:#7b7b7b;letter-spacing:0.704px">All</span>
<span class="t" style="left:129.97px;top:94.6px;height:40px;line-height:40px;font-size:24.5px;font-weight:700;color:#dadada;letter-spacing:0.401px">CharacterSelect</span>
<span class="t" style="left:155.79px;top:126.8px;height:40px;line-height:40px;font-size:24.5px;font-weight:400;color:#d2d2d2;letter-spacing:0.147px">Main Camera</span>
<span class="t" style="left:155.79px;top:158.8px;height:40px;line-height:40px;font-size:24.5px;font-weight:400;color:#d2d2d2;letter-spacing:0.547px">Directional Light</span>
<span class="t" style="left:155.96px;top:190.8px;height:40px;line-height:40px;font-size:24.5px;font-weight:400;color:#d2d2d2;letter-spacing:0.249px">Canvas</span>
<span class="t" style="left:183.79px;top:222.8px;height:40px;line-height:40px;font-size:24.5px;font-weight:400;color:#d2d2d2;letter-spacing:0.5px;word-spacing:-0.519px">Panel - Character Select</span>
<span class="t" style="left:212.51px;top:254.8px;height:40px;line-height:40px;font-size:24.5px;font-weight:400;color:#d2d2d2;letter-spacing:0.5px;word-spacing:3.967px">Text - Title</span>
<span class="t" style="left:211.79px;top:286.8px;height:40px;line-height:40px;font-size:24.5px;font-weight:400;color:#d2d2d2;letter-spacing:0.5px;word-spacing:1.766px">Button - Home</span>
<span class="t" style="left:211.6px;top:318.8px;height:40px;line-height:40px;font-size:24.5px;font-weight:400;color:#d2d2d2;letter-spacing:0.5px;word-spacing:0.718px">Scroll View - Characters</span>
<span class="t" style="left:240.33px;top:350.8px;height:40px;line-height:40px;font-size:24.5px;font-weight:400;color:#d2d2d2;letter-spacing:0.857px">Viewport</span>
<span class="t" style="left:267.96px;top:382.8px;height:40px;line-height:40px;font-size:24.5px;font-weight:400;color:#d2d2d2;letter-spacing:0.745px">Content</span>
<span class="t" style="left:295.79px;top:414.8px;height:40px;line-height:40px;font-size:24.5px;font-weight:400;color:#d2d2d2;letter-spacing:0.5px;word-spacing:1.762px">Button - Create</span>
<span class="t" style="left:295.79px;top:446.8px;height:40px;line-height:40px;font-size:24.5px;font-weight:400;color:#d2d2d2;letter-spacing:0.5px;word-spacing:0.902px">Button - Character File</span>
<span class="t" style="left:323.79px;top:478.8px;height:40px;line-height:40px;font-size:24.5px;font-weight:400;color:#d2d2d2;letter-spacing:0.593px">Main Buttons</span>
<span class="t" style="left:351.79px;top:510.8px;height:40px;line-height:40px;font-size:24.5px;font-weight:400;color:#ffffff;letter-spacing:0.5px;word-spacing:1.872px">Button - Load</span>
<span class="t" style="left:351.79px;top:542.8px;height:40px;line-height:40px;font-size:24.5px;font-weight:400;color:#d2d2d2;letter-spacing:0.5px;word-spacing:1.703px">Button - Delete</span>
<span class="t" style="left:323.96px;top:574.8px;height:40px;line-height:40px;font-size:24.5px;font-weight:400;color:#797979;letter-spacing:0.643px">Confirmation Buttons</span>
<span class="t" style="left:352.51px;top:606.8px;height:40px;line-height:40px;font-size:24.5px;font-weight:400;color:#797979;letter-spacing:0.5px;word-spacing:3.279px">Text - Confirm</span>
<span class="t" style="left:351.79px;top:638.8px;height:40px;line-height:40px;font-size:24.5px;font-weight:400;color:#797979;letter-spacing:0.5px;word-spacing:1.31px">Button - Confirm Delete</span>
<span class="t" style="left:351.79px;top:670.8px;height:40px;line-height:40px;font-size:24.5px;font-weight:400;color:#797979;letter-spacing:0.5px;word-spacing:1.627px">Button - Cancel</span>
<span class="t" style="left:239.6px;top:702.8px;height:40px;line-height:40px;font-size:24.5px;font-weight:400;color:#d2d2d2;letter-spacing:0.574px">Scrollbar Horizontal</span>
<span class="t" style="left:239.6px;top:734.8px;height:40px;line-height:40px;font-size:24.5px;font-weight:400;color:#d2d2d2;letter-spacing:0.638px">Scrollbar Vertical</span>
<span class="t" style="left:155.79px;top:766.8px;height:40px;line-height:40px;font-size:24.5px;font-weight:400;color:#d2d2d2;letter-spacing:0.548px">EventSystem</span>
<span class="t" style="left:729.47px;top:15.6px;height:40px;line-height:40px;font-size:24.5px;font-weight:400;color:#d2d2d2;letter-spacing:0.84px">Inspector</span>
<span class="t" style="left:816.82px;top:75.7px;height:40px;line-height:40px;font-size:24.5px;font-weight:700;color:#dadada;letter-spacing:0.2px;word-spacing:-0.27px">Button - Load</span>
<span class="t" style="left:1459.4px;top:74.5px;height:40px;line-height:40px;font-size:24.5px;font-weight:400;color:#c4c4c4;letter-spacing:0.917px">Static</span>
<span class="t" style="left:758.61px;top:122.6px;height:40px;line-height:40px;font-size:24.5px;font-weight:400;color:#c4c4c4;letter-spacing:1px">Tag</span>
<span class="t" style="left:817.16px;top:122px;height:40px;line-height:40px;font-size:24.5px;font-weight:400;color:#e4e4e4;letter-spacing:0.778px">Untagged</span>
<span class="t" style="left:1174.99px;top:122.6px;height:40px;line-height:40px;font-size:24.5px;font-weight:400;color:#c4c4c4;letter-spacing:0.578px">Layer</span>
<span class="t" style="left:1255.46px;top:122px;height:40px;line-height:40px;font-size:24.5px;font-weight:400;color:#e4e4e4;letter-spacing:1px">UI</span>
<span class="t" style="left:797.22px;top:179.2px;height:40px;line-height:40px;font-size:24.5px;font-weight:700;color:#dcdcdc;letter-spacing:0.365px">Rect Transform</span>
<span class="t" style="left:797.77px;top:223.2px;height:40px;line-height:40px;font-size:24.5px;font-weight:700;color:#dcdcdc;letter-spacing:0.073px">Canvas Renderer</span>
<span class="t" style="left:797.22px;top:267.2px;height:40px;line-height:40px;font-size:24.5px;font-weight:700;color:#dcdcdc;letter-spacing:0.576px">Image</span>
<span class="t" style="left:797.22px;top:311.2px;height:40px;line-height:40px;font-size:24.5px;font-weight:700;color:#dcdcdc;letter-spacing:0.353px">Button</span>
<span class="t" style="left:714.77px;top:358.7px;height:40px;line-height:40px;font-size:24.5px;font-weight:400;color:#c4c4c4;letter-spacing:0.858px">Interactable</span>
<span class="t" style="left:716.51px;top:398.7px;height:40px;line-height:40px;font-size:24.5px;font-weight:400;color:#c4c4c4;letter-spacing:0.71px">Transition</span>
<span class="t" style="left:746.61px;top:438.7px;height:40px;line-height:40px;font-size:24.5px;font-weight:400;color:#c4c4c4;letter-spacing:0.687px">Target Graphic</span>
<span class="t" style="left:745.09px;top:478.7px;height:40px;line-height:40px;font-size:24.5px;font-weight:400;color:#c4c4c4;letter-spacing:0.437px">Normal Color</span>
<span class="t" style="left:745.09px;top:518.7px;height:40px;line-height:40px;font-size:24.5px;font-weight:400;color:#c4c4c4;letter-spacing:0.653px">Highlighted Color</span>
<span class="t" style="left:745.09px;top:558.7px;height:40px;line-height:40px;font-size:24.5px;font-weight:400;color:#c4c4c4;letter-spacing:0.402px">Pressed Color</span>
<span class="t" style="left:745.7px;top:598.7px;height:40px;line-height:40px;font-size:24.5px;font-weight:400;color:#c4c4c4;letter-spacing:0.507px">Selected Color</span>
<span class="t" style="left:745.09px;top:638.7px;height:40px;line-height:40px;font-size:24.5px;font-weight:400;color:#c4c4c4;letter-spacing:0.492px">Disabled Color</span>
<span class="t" style="left:745.86px;top:678.7px;height:40px;line-height:40px;font-size:24.5px;font-weight:400;color:#c4c4c4;letter-spacing:0.536px">Color Multiplier</span>
<span class="t" style="left:745.09px;top:718.7px;height:40px;line-height:40px;font-size:24.5px;font-weight:400;color:#c4c4c4;letter-spacing:0.483px">Fade Duration</span>
<span class="t" style="left:714.99px;top:774.7px;height:40px;line-height:40px;font-size:24.5px;font-weight:400;color:#c4c4c4;letter-spacing:0.785px">Navigation</span>
<span class="t" style="left:1050.76px;top:397.7px;height:40px;line-height:40px;font-size:24.5px;font-weight:400;color:#e4e4e4;letter-spacing:0.686px">Color Tint</span>
<span class="t" style="left:1075.19px;top:439.7px;height:40px;line-height:40px;font-size:24.5px;font-weight:400;color:#d2d2d2;letter-spacing:0.5px;word-spacing:0.314px">Button - Load (Image)</span>
<span class="t" style="left:1474.79px;top:678.7px;height:40px;line-height:40px;font-size:24.5px;font-weight:400;color:#d2d2d2;letter-spacing:0px">1</span>
<span class="t" style="left:1049px;top:718.7px;height:40px;line-height:40px;font-size:24.5px;font-weight:400;color:#d2d2d2;letter-spacing:-0.319px">0.1</span>
<span class="t" style="left:1051.39px;top:773.7px;height:40px;line-height:40px;font-size:24.5px;font-weight:400;color:#e4e4e4;letter-spacing:0.718px">Automatic</span>
<span class="t" style="left:1254.73px;top:818px;height:40px;line-height:40px;font-size:24.5px;font-weight:400;color:#eeeeee;letter-spacing:0.402px">Visualize</span>
<span class="t" style="left:729.64px;top:876.7px;height:40px;line-height:40px;font-size:24.5px;font-weight:400;color:#c4c4c4;letter-spacing:0.302px">On Click ()</span>
<span class="t" style="left:763.29px;top:927px;height:40px;line-height:40px;font-size:24.5px;font-weight:400;color:#e4e4e4;letter-spacing:0.172px">Runtime Only</span>
<span class="t" style="left:1013.79px;top:927px;height:40px;line-height:40px;font-size:24.5px;font-weight:400;color:#e4e4e4;letter-spacing:0.475px">MenuCharacterSelectFile.LoadCharacter</span>
<span class="t" style="left:768.45px;top:970.4px;height:40px;line-height:40px;font-size:17px;font-weight:700;color:#2a7030;letter-spacing:0px">#</span>
<span class="t" style="left:786.99px;top:968.6px;height:40px;line-height:40px;font-size:24.5px;font-weight:400;color:#d2d2d2;letter-spacing:0.5px;word-spacing:0.902px;width:171.01px;overflow:hidden">Button - Character File</span>
</div>
<svg style="left:0;top:0" width="1582" height="1080" viewBox="0 0 1582 1080"><path d="M554.3 474.4 L842.6 937.7 L824.4 949.0 L876.0 980.5 L870.6 920.3 L852.3 931.6 L563.9 468.4 Z" fill="#e84025"/></svg>
</body></html>
